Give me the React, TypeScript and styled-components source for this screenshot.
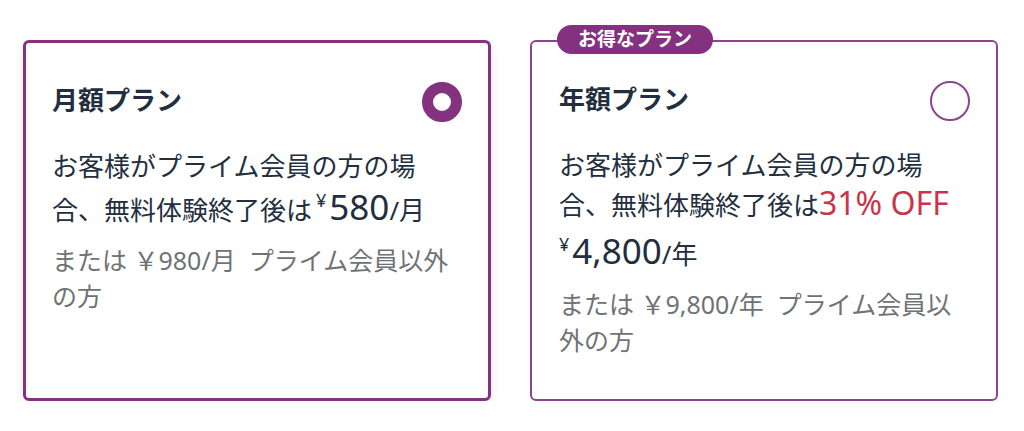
import React from "react";
import styled, { createGlobalStyle } from "styled-components";

const PURPLE = "#84327f";
const PURPLE_LIGHT = "#8e4290";
const INK = "#232f3e";
const MUTED = "#6f7373";
const RED = "#c7364b";

const GlobalStyle = createGlobalStyle`
  html, body { margin: 0; padding: 0; background: #fff; }
  body {
    font-family: "Noto Sans", "Noto Sans CJK JP", sans-serif;
    color: ${INK};
  }
`;

const Page = styled.main`
  display: grid;
  grid-template-columns: 468px 468px;
  column-gap: 39px;
  align-items: stretch;
  padding: 40px 0 0 23px;
`;

const Card = styled.section<{ $selected?: boolean }>`
  position: relative;
  box-sizing: border-box;
  background: #fff;
  border-radius: 6px;
  border: ${(p) => (p.$selected ? `3px solid ${PURPLE}` : `2px solid ${PURPLE_LIGHT}`)};
  padding: ${(p) => (p.$selected ? "39px 26px 40px 26px" : "39px 26px 41px 27px")};
  box-shadow: ${(p) => (p.$selected ? "0 5px 12px rgba(0, 0, 0, 0.10)" : "none")};
`;

const Badge = styled.span`
  position: absolute;
  top: -17px;
  left: 25px;
  height: 29px;
  padding: 0 21px;
  border-radius: 15px;
  background: ${PURPLE};
  color: #fff;
  font-size: 19px;
  font-weight: 700;
  line-height: 29px;
  white-space: nowrap;
`;

const Header = styled.div`
  display: flex;
  justify-content: space-between;
  align-items: flex-start;
`;

const Title = styled.h2`
  margin: 0;
  padding-top: 2px;
  font-size: 26px;
  line-height: 32px;
  font-weight: 700;
  color: ${INK};
`;

const Radio = styled.span<{ $checked?: boolean }>`
  flex: none;
  box-sizing: border-box;
  width: 40px;
  height: 40px;
  border-radius: 50%;
  background: #fff;
  border: ${(p) => (p.$checked ? `11px solid ${PURPLE}` : `2px solid ${PURPLE_LIGHT}`)};
`;

const Desc = styled.p`
  margin: 24px 0 0;
  font-size: 26px;
  line-height: 40px;
  color: ${INK};
`;

const Off = styled.span`
  font-size: 32px;
  line-height: 1;
  color: ${RED};
`;

const Price = styled.span<{ $own?: boolean }>`
  display: ${(p) => (p.$own ? "block" : "inline-block")};
  margin: ${(p) => (p.$own ? "3px 0 0 0" : "0 0 0 4px")};
  font-size: 35px;
  line-height: ${(p) => (p.$own ? "46px" : "42px")};
  color: ${INK};
`;

const Yen = styled.span`
  font-size: 18px;
  line-height: 1;
  vertical-align: 13px;
  margin-right: 3px;
`;

const Amount = styled.span`
  line-height: 1;
`;

const Unit = styled.span`
  font-size: 26px;
  line-height: 1;
`;

const Note = styled.p`
  margin: 12px 0 0;
  font-size: 25px;
  line-height: 36px;
  color: ${MUTED};
`;

export default function App() {
  return (
    <>
      <GlobalStyle />
      <Page>
        <Card $selected>
          <Header>
            <Title>月額プラン</Title>
            <Radio $checked />
          </Header>
          <Desc>
            お客様がプライム会員の方の場
            <br />
            合、無料体験終了後は
            <Price>
              <Yen>¥</Yen>
              <Amount>580</Amount>
              <Unit>/月</Unit>
            </Price>
          </Desc>
          <Note>{"または ￥980/月\u00a0 プライム会員以外の方"}</Note>
        </Card>
        <Card>
          <Badge>お得なプラン</Badge>
          <Header>
            <Title>年額プラン</Title>
            <Radio />
          </Header>
          <Desc>
            お客様がプライム会員の方の場
            <br />
            合、無料体験終了後は<Off>31% OFF</Off>
            <Price $own>
              <Yen>¥</Yen>
              <Amount>4,800</Amount>
              <Unit>/年</Unit>
            </Price>
          </Desc>
          <Note>{"または ￥9,800/年\u00a0 プライム会員以外の方"}</Note>
        </Card>
      </Page>
    </>
  );
}
